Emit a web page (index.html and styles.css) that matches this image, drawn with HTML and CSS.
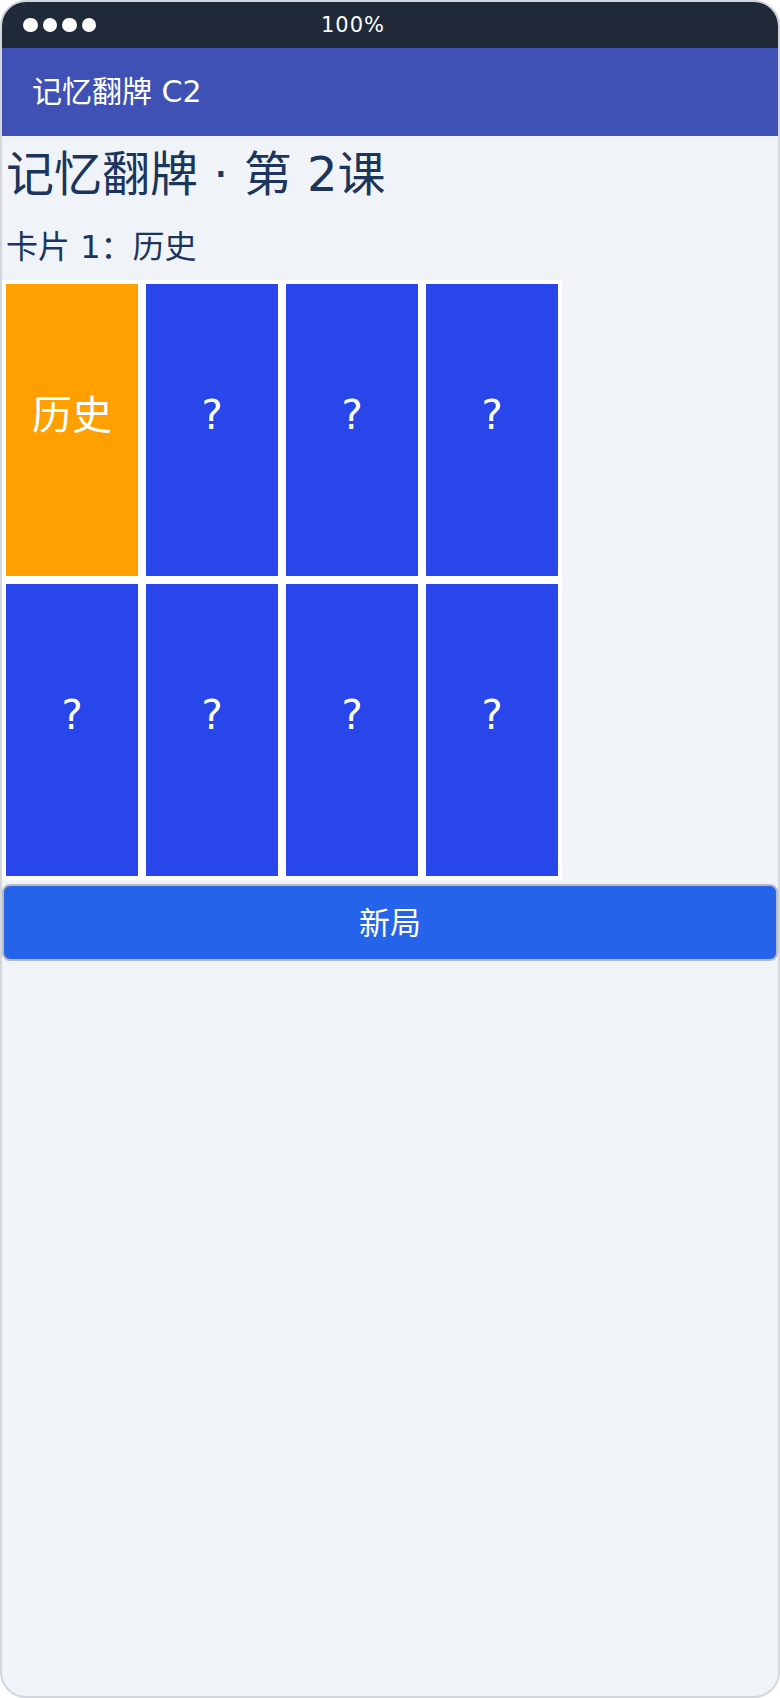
FILE: index.html
```html
<!DOCTYPE html>
<html lang="zh-CN">
  <head>
    <meta charset="UTF-8" />
    <meta name="viewport" content="width=device-width, initial-scale=1.0" />
    <title>记忆翻牌 C2</title>
    <link rel="stylesheet" href="styles.css">
  </head>
  <body>
    <div class="phone">
      <div class="status-bar">
        <div class="signal">
          <span class="dot"></span>
          <span class="dot"></span>
          <span class="dot"></span>
          <span class="dot"></span>
        </div>
        <span class="battery">100%</span>
      </div>

      <header class="app-bar">记忆翻牌 C2</header>

      <main class="content">
        <h1>记忆翻牌 · 第 2课</h1>
        <p class="hint">卡片 1：历史</p>

        <div class="board">
          <div class="card open">历史</div>
          <div class="card">?</div>
          <div class="card">?</div>
          <div class="card">?</div>
          <div class="card">?</div>
          <div class="card">?</div>
          <div class="card">?</div>
          <div class="card">?</div>
        </div>

        <button class="new-game">新局</button>
      </main>
    </div>
  </body>
</html>
```

FILE: styles.css
```css
:root {
  --bg: #f0f4f9;
  --ink: #1c355c;
  --status: #1f2937;
  --bar: #3f51b5;
  --card: #2846e9;
  --card-open: #ffa000;
  --primary: #2563eb;
}

* {
  box-sizing: border-box;
  margin: 0;
  padding: 0;
}

body {
  background: #fff;
  font-family: "DejaVu Sans", "Noto Sans CJK SC", sans-serif;
}

.phone {
  width: 780px;
  height: 1698px;
  border: 2px solid #d3d6db;
  border-radius: 26px;
  overflow: hidden;
  background: var(--bg);
}

.status-bar {
  display: flex;
  align-items: center;
  height: 46px;
  padding: 0 21px;
  background: var(--status);
  color: #fff;
}

.signal {
  display: flex;
  gap: 5px;
}

.dot {
  width: 14.5px;
  height: 14.5px;
  border-radius: 50%;
  background: #fff;
}

.battery {
  margin-left: 225px;
  font-size: 21px;
  letter-spacing: 1px;
}

.app-bar {
  display: flex;
  align-items: center;
  height: 88px;
  padding: 0 0 6px 30px;
  background: var(--bar);
  color: #fff;
  font-size: 30px;
}

h1 {
  margin-top: 10px;
  padding: 0 4px;
  font-size: 48px;
  font-weight: 400;
  line-height: 56px;
  color: var(--ink);
}

.hint {
  margin-top: 27px;
  padding: 0 4px;
  font-size: 32px;
  line-height: 36px;
  color: var(--ink);
}

.board {
  display: grid;
  grid-template-columns: repeat(4, 132px);
  gap: 8px;
  width: fit-content;
  margin-top: 15px;
  padding: 4px;
  background: #fff;
}

.card {
  display: flex;
  justify-content: center;
  align-items: center;
  height: 292px;
  padding-bottom: 30px;
  background: var(--card);
  color: #fff;
  font-size: 40px;
}

.card.open {
  background: var(--card-open);
  padding-bottom: 36px;
}

.new-game {
  display: block;
  width: 100%;
  height: 77px;
  margin-top: 4px;
  padding-bottom: 4px;
  border: 2px solid #b7bac0;
  border-radius: 8px;
  background: var(--primary);
  color: #fff;
  font-family: inherit;
  font-size: 31px;
  cursor: pointer;
}
```
